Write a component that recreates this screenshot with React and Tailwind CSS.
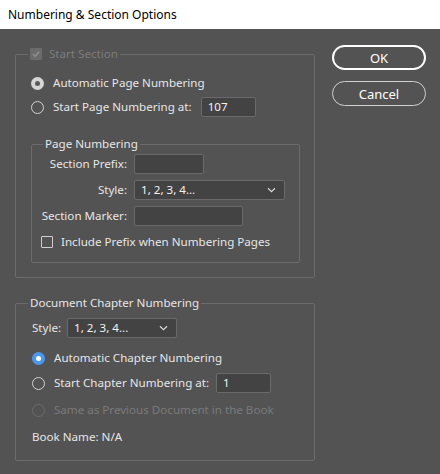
import React from 'react';

function Radio({ checked = false, blue = false, disabled = false }) {
  if (checked && blue) {
    return (
      <span className="w-[13px] h-[13px] rounded-full bg-[#4a98ee] flex items-center justify-center shrink-0">
        <span className="w-[5px] h-[5px] rounded-full bg-white" />
      </span>
    );
  }
  if (checked) {
    return (
      <span className="w-[13px] h-[13px] rounded-full bg-[#d6d6d6] flex items-center justify-center shrink-0">
        <span className="w-[5px] h-[5px] rounded-full bg-[#5a5a5a]" />
      </span>
    );
  }
  return (
    <span
      className={
        disabled
          ? 'w-[13px] h-[13px] rounded-full border border-[#6c6c6c] shrink-0'
          : 'w-[13px] h-[13px] rounded-full border border-[#d2d2d2] shrink-0'
      }
    />
  );
}

function Chevron() {
  return (
    <svg width="9" height="6" viewBox="0 0 9 6" className="shrink-0">
      <path d="M1 1.2 L4.5 4.6 L8 1.2" fill="none" stroke="#d8d8d8" strokeWidth="1.2" />
    </svg>
  );
}

function TextBox({ value = '', className = '' }) {
  return (
    <div
      className={
        'h-[20px] bg-[#434343] border border-[#6a6a6a] rounded-[2px] flex items-center px-[6px] text-[#f2f2f2] ' +
        className
      }
    >
      {value}
    </div>
  );
}

function Select({ value, className = '' }) {
  return (
    <div
      className={
        'h-[20px] bg-[#434343] border border-[#6a6a6a] rounded-[2px] flex items-center justify-between pl-[6px] pr-[8px] text-[#f2f2f2] ' +
        className
      }
    >
      <span>{value}</span>
      <Chevron />
    </div>
  );
}

export default function App() {
  return (
    <div className="w-[440px] h-[474px] bg-[#535353] font-['Noto_Sans',sans-serif] text-[11.6px] leading-[16px] text-[#e6e6e6] flex flex-col">
      {/* Title bar */}
      <div className="h-[29px] bg-white text-black flex items-center pl-[8px] text-[12px]">
        Numbering &amp; Section Options
      </div>

      <div className="flex pl-[15px] pt-[17px]">
        {/* Left column */}
        <div className="w-[300px] flex flex-col gap-[17px]">
          {/* Start Section */}
          <fieldset className="border border-[#6c6c6c] rounded-[2px]">
            <legend className="ml-[12px] px-[2px]">
              <span className="inline-flex items-center gap-[7px] h-[16px] text-[#7c7c7c]">
                <span className="w-[12px] h-[12px] rounded-[1px] bg-[#6b6b6b] flex items-center justify-center">
                  <svg width="10" height="10" viewBox="0 0 10 10">
                    <path d="M2 5.2 L4.2 7.3 L8.2 2.6" fill="none" stroke="#8c8c8c" strokeWidth="1.6" />
                  </svg>
                </span>
                Start Section
              </span>
            </legend>
            <div className="pl-[15px] pr-[14px] pt-[10px] pb-[14px] flex flex-col">
              <div className="h-[20px] flex items-center gap-[9px]">
                <Radio checked />
                <span>Automatic Page Numbering</span>
              </div>
              <div className="h-[20px] mt-[4px] flex items-center">
                <Radio />
                <span className="ml-[9px]">Start Page Numbering at:</span>
                <TextBox value="107" className="ml-[9px] w-[55px]" />
              </div>

              <fieldset className="mt-[19px] border border-[#6c6c6c] rounded-[2px]">
                <legend className="ml-[11px] px-[2px]">Page Numbering</legend>
                <div className="pt-[2px] pb-[12px] flex flex-col">
                  <div className="flex items-center gap-[7px]">
                    <span className="w-[95px] text-right">Section Prefix:</span>
                    <TextBox className="w-[70px]" />
                  </div>
                  <div className="mt-[6px] flex items-center gap-[7px]">
                    <span className="w-[95px] text-right">Style:</span>
                    <Select value="1, 2, 3, 4..." className="w-[151px]" />
                  </div>
                  <div className="mt-[6px] flex items-center gap-[7px]">
                    <span className="w-[95px] text-right">Section Marker:</span>
                    <TextBox className="w-[109px]" />
                  </div>
                  <div className="mt-[8px] pl-[9px] h-[16px] flex items-center gap-[8px]">
                    <span className="w-[12px] h-[12px] rounded-[1px] border border-[#cfcfcf]" />
                    <span>Include Prefix when Numbering Pages</span>
                  </div>
                </div>
              </fieldset>
            </div>
          </fieldset>

          {/* Document Chapter Numbering */}
          <fieldset className="border border-[#6c6c6c] rounded-[2px]">
            <legend className="ml-[12px] px-[2px]">Document Chapter Numbering</legend>
            <div className="pl-[16px] pt-[7px] pb-[13px] flex flex-col">
              <div className="flex items-center gap-[6px]">
                <span>Style:</span>
                <Select value="1, 2, 3, 4..." className="w-[110px]" />
              </div>
              <div className="mt-[10px] h-[20px] flex items-center gap-[9px]">
                <Radio checked blue />
                <span>Automatic Chapter Numbering</span>
              </div>
              <div className="mt-[5px] h-[20px] flex items-center">
                <Radio />
                <span className="ml-[9px]">Start Chapter Numbering at:</span>
                <TextBox value="1" className="ml-[7px] w-[55px]" />
              </div>
              <div className="mt-[7px] h-[20px] flex items-center gap-[9px] text-[#7a7a7a]">
                <Radio disabled />
                <span>Same as Previous Document in the Book</span>
              </div>
              <div className="mt-[7px] h-[20px] flex items-center">Book Name: N/A</div>
            </div>
          </fieldset>
        </div>

        {/* Buttons */}
        <div className="ml-[17px] -mt-px flex flex-col gap-[11px]">
          <button className="w-[94px] h-[25px] rounded-full border-2 border-white text-white text-[13px] flex items-center justify-center">
            OK
          </button>
          <button className="w-[94px] h-[25px] rounded-full border border-[#cfcfcf] text-white text-[13px] flex items-center justify-center">
            Cancel
          </button>
        </div>
      </div>
    </div>
  );
}
